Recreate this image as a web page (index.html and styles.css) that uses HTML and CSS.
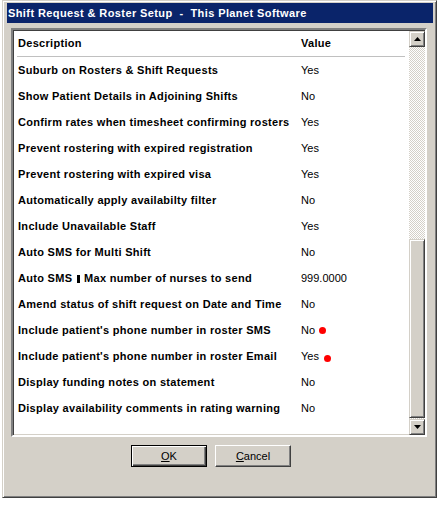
FILE: index.html
```html
<!DOCTYPE html>
<html lang="en">
<head>
	<meta charset="UTF-8">
	<title>Shift Request &amp; Roster Setup</title>
	<link rel="stylesheet" href="styles.css">
</head>
<body>
	<div class="window">
		<div class="caption">Shift Request &amp; Roster Setup  -  This Planet Software</div>
		<div class="panel">
			<div class="list">
				<div class="row head">
					<span class="desc">Description</span>
					<span class="val">Value</span>
				</div>
				<div class="rule"></div>
				<div class="row"><span class="desc">Suburb on Rosters &amp; Shift Requests</span><span class="val">Yes</span></div>
				<div class="row"><span class="desc">Show Patient Details in Adjoining Shifts</span><span class="val">No</span></div>
				<div class="row"><span class="desc">Confirm rates when timesheet confirming rosters</span><span class="val">Yes</span></div>
				<div class="row"><span class="desc">Prevent rostering with expired registration</span><span class="val">Yes</span></div>
				<div class="row"><span class="desc">Prevent rostering with expired visa</span><span class="val">Yes</span></div>
				<div class="row"><span class="desc">Automatically apply availabilty filter</span><span class="val">No</span></div>
				<div class="row"><span class="desc">Include Unavailable Staff</span><span class="val">Yes</span></div>
				<div class="row"><span class="desc">Auto SMS for Multi Shift</span><span class="val">No</span></div>
				<div class="row"><span class="desc">Auto SMS <span class="bar"></span> Max number of nurses to send</span><span class="val">999.0000</span></div>
				<div class="row"><span class="desc">Amend status of shift request on Date and Time</span><span class="val">No</span></div>
				<div class="row"><span class="desc">Include patient's phone number in roster SMS</span><span class="val">No <i class="dot"></i></span></div>
				<div class="row"><span class="desc">Include patient's phone number in roster Email</span><span class="val">Yes <i class="dot low"></i></span></div>
				<div class="row"><span class="desc">Display funding notes on statement</span><span class="val">No</span></div>
				<div class="row"><span class="desc">Display availability comments in rating warning</span><span class="val">No</span></div>
			</div>
			<div class="scrollbar">
				<div class="sbtn">
					<svg width="7" height="4" viewBox="0 0 7 4"><path d="M3.5 0L7 4H0z" fill="#000"/></svg>
				</div>
				<div class="track"></div>
				<div class="thumb"></div>
				<div class="track small"></div>
				<div class="sbtn">
					<svg width="7" height="4" viewBox="0 0 7 4"><path d="M0 0H7L3.5 4z" fill="#000"/></svg>
				</div>
			</div>
		</div>
		<div class="buttons">
			<button class="btn default"><u>O</u>K</button>
			<button class="btn"><u>C</u>ancel</button>
		</div>
	</div>
</body>
</html>
```

FILE: styles.css
```css
*{margin:0;padding:0;box-sizing:border-box;}
body{background:#fff;font-family:"Liberation Sans",Arial,sans-serif;font-size:11px;color:#000;}

/* window frame */
.window{margin-left:2px;width:435px;height:498px;background:#d4d0c8;padding:2px 3px 0 4px;
	border:1px solid;border-color:#d4d0c8 #404040 #404040 #d4d0c8;
	box-shadow:inset 1px 1px #fff,inset -1px -1px #808080;
}
.caption{height:20px;line-height:20px;background:#0a246a;color:#fff;font-weight:bold;padding-left:1px;white-space:pre;letter-spacing:0.4px;}

/* sunken list panel */
.panel{margin:5px 0 0 4px;width:416px;height:409px;display:flex;background:#fff;
	border:2px solid;border-color:#808080 #fff #fff #808080;
	box-shadow:inset 1px 1px #404040,inset -1px -1px #d4d0c8;
}
.list{flex:1;padding:0 0 0 5px;}
.row{display:flex;align-items:center;height:26px;}
.desc{width:283px;font-weight:bold;white-space:nowrap;letter-spacing:0.3px;}
.val{display:flex;align-items:center;}
.head .val{font-weight:bold;letter-spacing:0.3px;}
.rule{height:1px;background:#c0c0c0;margin:0 4px 0 -1px;}
.bar{display:inline-block;width:3px;height:8px;background:#000;vertical-align:-1px;margin:0 1px;}
.dot{display:inline-block;width:7px;height:7px;border-radius:50%;background:#f00;margin-left:4px;}
.dot.low{margin-left:5px;position:relative;top:2px;}

/* scrollbar */
.scrollbar{width:16px;display:flex;flex-direction:column;padding-top:1px;}
.sbtn,.thumb{background:#d4d0c8;border:1px solid;border-color:#d4d0c8 #404040 #404040 #d4d0c8;
	box-shadow:inset 1px 1px #fff,inset -1px -1px #808080;}
.sbtn{height:16px;display:flex;align-items:center;justify-content:center;}
.track{height:192px;background:repeating-conic-gradient(#fff 0 25%,#d4d0c8 0 50%) 0 0/2px 2px;}
.track.small{height:1px;}
.thumb{height:179px;}

/* buttons */
.buttons{display:flex;gap:8px;margin:8px 0 0 124px;}
.btn{width:76px;height:22px;background:#d4d0c8;font:11px "Liberation Sans",Arial,sans-serif;color:#000;
	border:1px solid;border-color:#fff #404040 #404040 #fff;
	box-shadow:inset -1px -1px #808080;
}
.btn.default{border:1px solid #000;box-shadow:inset 1px 1px #fff,inset -1px -1px #404040,inset -2px -2px #808080;}
.btn u{text-decoration:underline;}
```
